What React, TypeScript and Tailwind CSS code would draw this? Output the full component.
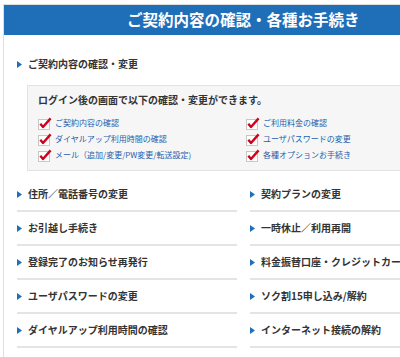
const checks = [
  ['ご契約内容の確認', 'ご利用料金の確認'],
  ['ダイヤルアップ利用時間の確認', 'ユーザパスワードの変更'],
  ['メール（追加/変更/PW変更/転送設定)', '各種オプションお手続き'],
];

const links = [
  ['住所／電話番号の変更', '契約プランの変更'],
  ['お引越し手続き', '一時休止／利用再開'],
  ['登録完了のお知らせ再発行', '料金振替口座・クレジットカード'],
  ['ユーザパスワードの変更', 'ソク割15申し込み/解約'],
  ['ダイヤルアップ利用時間の確認', 'インターネット接続の解約'],
];

function Arrow() {
  return (
    <svg width="5" height="7" viewBox="0 0 5 7" className="shrink-0">
      <path d="M0 0 L5 3.5 L0 7 Z" fill="#1f6fba" />
    </svg>
  );
}

function CheckBox() {
  return (
    <svg width="14" height="13" viewBox="0 0 14 13" className="shrink-0">
      <rect x="0.5" y="2.5" width="11" height="10" fill="#fff" stroke="#c8c8c8" />
      <path d="M2.3 6.8 L5 10 L12.6 1.4" fill="none" stroke="#d0021b" strokeWidth="2.4" strokeLinejoin="round" />
    </svg>
  );
}

function CheckItem({ label }: { label: string }) {
  return (
    <div className="flex items-center h-[16px] gap-[3px]">
      <CheckBox />
      <span className="text-[8px] text-[#1d5fae] whitespace-nowrap leading-none">{label}</span>
    </div>
  );
}

function LinkRow({ label }: { label: string }) {
  return (
    <div className="h-[34px] border-b-2 border-[#e4e4e4] flex items-center gap-[6px]">
      <Arrow />
      <span className="text-[10px] font-bold text-[#333] whitespace-nowrap leading-none">{label}</span>
    </div>
  );
}

export default function App() {
  return (
    <div
      className="w-[400px] h-[357px] overflow-hidden bg-white"
      style={{ fontFamily: '"Noto Sans CJK JP", "Noto Sans", sans-serif' }}
    >
      <div className="ml-[3px] mt-[4px] w-[480px] border-l border-t border-[#dedede] pb-4">
        <div className="h-[30px] bg-[#1f6eb8] flex items-center pl-[123px]">
          <span className="text-[15.5px] font-bold text-white whitespace-nowrap leading-none">
            ご契約内容の確認・各種お手続き
          </span>
        </div>

        <div className="mt-[22px] ml-[13px] h-[14px] flex items-center gap-[6px]">
          <Arrow />
          <span className="text-[10px] font-bold text-[#333] leading-none">ご契約内容の確認・変更</span>
        </div>

        <div className="mt-[14px] ml-[23px] w-[420px] bg-[#f6f6f6] border border-[#e3e3e3] pt-[7px] pb-[7px] pl-[10px]">
          <div className="h-[14px] flex items-center text-[10px] font-bold text-[#333] leading-none">
            ログイン後の画面で以下の確認・変更ができます。
          </div>
          <div className="mt-[8px] grid grid-cols-[208px_1fr]">
            {checks.map(([a, b]) => (
              <div key={a} className="contents">
                <CheckItem label={a} />
                <CheckItem label={b} />
              </div>
            ))}
          </div>
        </div>

        <div className="mt-[7px] ml-[13px] grid grid-cols-[220px_220px] gap-x-[13px]">
          {links.map(([a, b]) => (
            <div key={a} className="contents">
              <LinkRow label={a} />
              <LinkRow label={b} />
            </div>
          ))}
        </div>
      </div>
    </div>
  );
}
